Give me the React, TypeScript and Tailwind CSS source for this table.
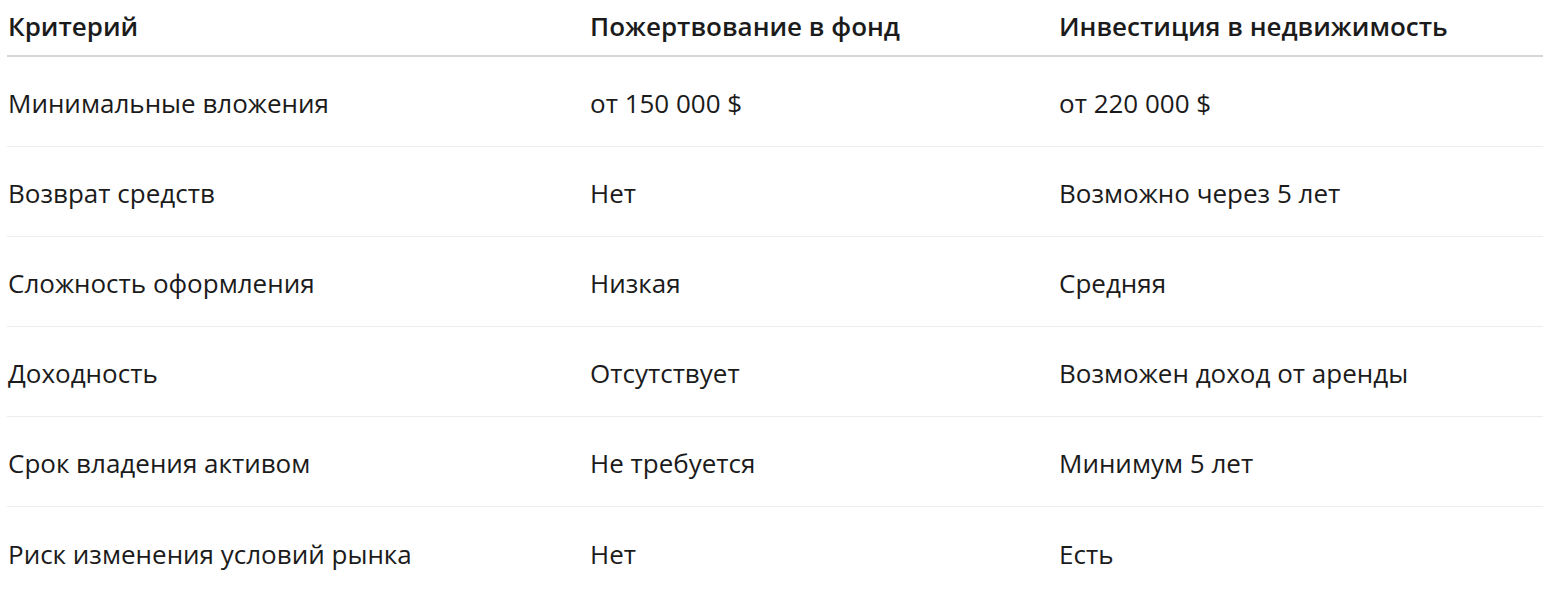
import React from "react";

const rows: [string, string, string][] = [
  ["Минимальные вложения", "от 150 000 $", "от 220 000 $"],
  ["Возврат средств", "Нет", "Возможно через 5 лет"],
  ["Сложность оформления", "Низкая", "Средняя"],
  ["Доходность", "Отсутствует", "Возможен доход от аренды"],
  ["Срок владения активом", "Не требуется", "Минимум 5 лет"],
  ["Риск изменения условий рынка", "Нет", "Есть"],
];

export default function App() {
  return (
    <div className="min-h-screen bg-white pl-[7px] pr-[8px] text-[#1b1b1b] [font-family:'Open_Sans','Noto_Sans',sans-serif]">
      <div className="grid grid-cols-[583px_469px_1fr] h-[57px] items-center border-b-2 border-[#d6d6d6] text-[26px] font-semibold leading-none">
        <div className="pl-[1px] pb-[4px]">Критерий</div>
        <div className="pb-[4px]">Пожертвование в фонд</div>
        <div className="pb-[4px]">Инвестиция в недвижимость</div>
      </div>
      {rows.map((r, i) => (
        <div
          key={i}
          className={`grid grid-cols-[583px_469px_1fr] h-[90px] items-center text-[26px] leading-none font-normal pt-[3px] ${
            i < rows.length - 1 ? "border-b border-[#ececec]" : ""
          }`}
        >
          <div className="pl-[1px]">{r[0]}</div>
          <div>{r[1]}</div>
          <div>{r[2]}</div>
        </div>
      ))}
    </div>
  );
}
